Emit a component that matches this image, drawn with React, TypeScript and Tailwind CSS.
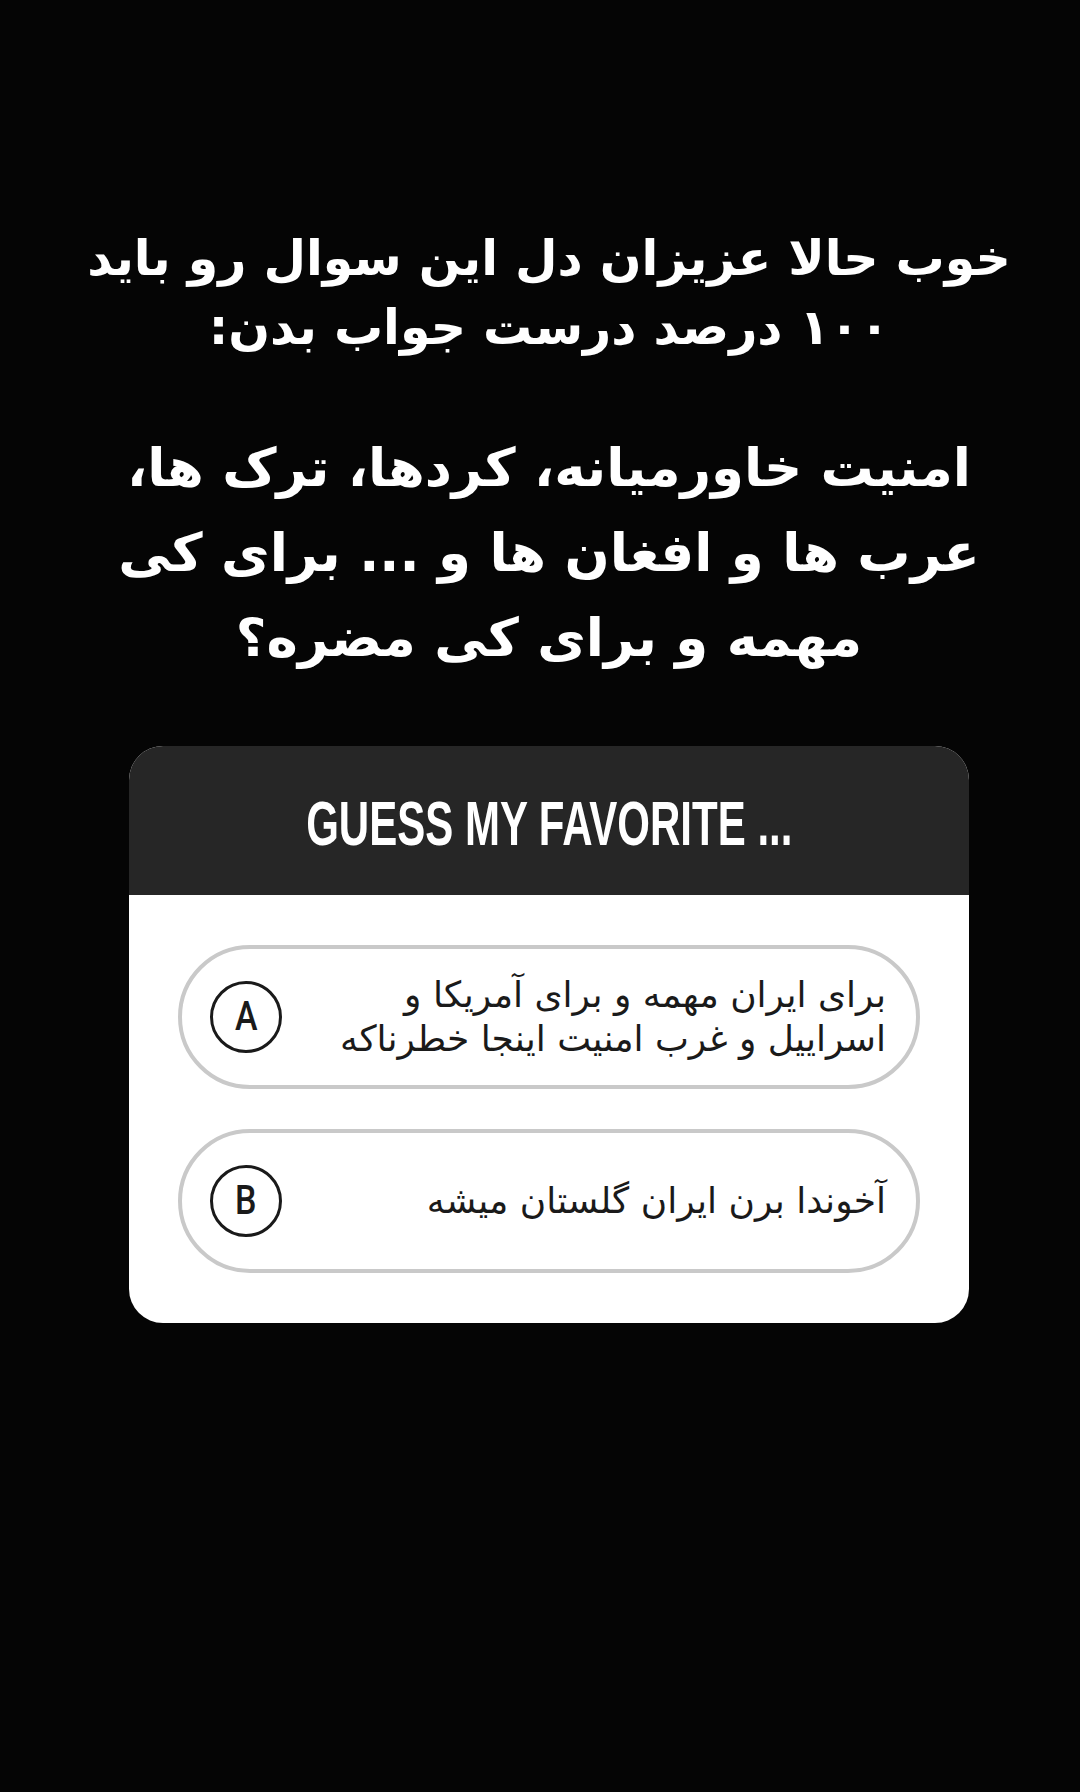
import React from "react";

const fa = { fontFamily: '"DejaVu Sans", "Noto Sans", sans-serif' };

function Option({ letter, lines }: { letter: string; lines: string[] }) {
  return (
    <div className="h-[144px] rounded-full border-[4px] border-[#c9c9c9] flex items-center justify-between pl-[28px] pr-[30px] bg-white">
      <div className="w-[72px] h-[72px] rounded-full border-[3.5px] border-[#1a1a1a] flex items-center justify-center shrink-0">
        <span className="text-[40px] leading-none text-[#1a1a1a] font-medium inline-block scale-x-[0.85]" style={{ fontFamily: '"Roboto", sans-serif' }}>
          {letter}
        </span>
      </div>
      <div dir="rtl" className="flex flex-col text-right text-[#1a1a1a] text-[36px] leading-[44px]" style={fa}>
        {lines.map((l, i) => (
          <div key={i} className="whitespace-nowrap">{l}</div>
        ))}
      </div>
    </div>
  );
}

export default function App() {
  return (
    <div className="w-[1080px] h-[1792px] bg-[#050505] flex flex-col items-center overflow-hidden pl-[18px]">
      <div dir="rtl" className="mt-[224px] flex flex-col items-center text-white font-bold text-[49px] leading-[69px]" style={fa}>
        <div className="whitespace-nowrap">خوب حالا عزیزان دل این سوال رو باید</div>
        <div className="whitespace-nowrap">۱۰۰ درصد درست جواب بدن:</div>
      </div>
      <div dir="rtl" className="mt-[63px] flex flex-col items-center text-white font-bold text-[53px] leading-[85px]" style={fa}>
        <div className="whitespace-nowrap">امنیت خاورمیانه، کردها، ترک ها،</div>
        <div className="whitespace-nowrap">عرب ها و افغان ها و ... برای کی</div>
        <div className="whitespace-nowrap">مهمه و برای کی مضره؟</div>
      </div>
      <div className="mt-[66px] w-[840px] rounded-[34px] overflow-hidden bg-white">
        <div className="h-[149px] bg-[#262626] flex items-center justify-center">
          <span
            className="inline-block text-white font-bold text-[60px] leading-none scale-x-[0.7] scale-y-[1.05] translate-y-[3px]"
            style={{ fontFamily: '"Liberation Sans", Arial, sans-serif' }}
          >
            GUESS MY FAVORITE ...
          </span>
        </div>
        <div className="px-[49px] pt-[50px] pb-[50px] flex flex-col gap-[40px]">
          <Option letter="A" lines={["برای ایران مهمه و برای آمریکا و", "اسراییل و غرب امنیت اینجا خطرناکه"]} />
          <Option letter="B" lines={["آخوندا برن ایران گلستان میشه"]} />
        </div>
      </div>
    </div>
  );
}
